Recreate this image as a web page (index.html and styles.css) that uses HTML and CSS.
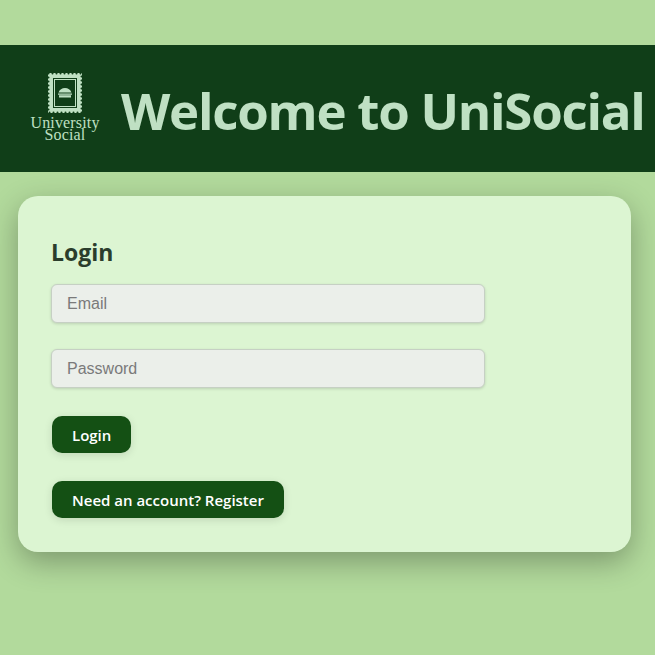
FILE: index.html
```html
<!DOCTYPE html>
<html lang="en">
<head>
  <meta charset="UTF-8">
  <title>UniSocial Login</title>
  <meta name="viewport" content="width=device-width, initial-scale=1.0">
  <link rel="stylesheet" href="styles.css">
</head>
<body>
  <!-- Top banner: logo and page title -->
  <header class="banner">
    <div class="logo">
      <svg class="logo-mark" width="34" height="40" viewBox="0 0 34 40">
        <rect class="stamp-fill" x="0" y="0" width="34" height="40"/>
        <rect class="stamp-holes" x="0.500" y="0.500" width="33" height="39"/>
        <rect class="stamp-dark" x="5" y="5" width="24" height="30"/>
        <rect class="stamp-line" x="6.500" y="6.500" width="21" height="27"/>
        <path class="stamp-fill" d="M10.500 19.500c1-3 3.500-4.500 6.500-4.500s5.500 1.500 6.500 4.500zM10 20.500h14v1.200H10zM11 22.300h12v2.200H11z"/>
      </svg>
      <div class="logo-text">University<br>Social</div>
    </div>
    <h1 class="banner-title">Welcome to UniSocial</h1>
  </header>

  <!-- Login card -->
  <main class="card">
    <h2 class="card-title">Login</h2>
    <form class="login-form">
      <input class="field" type="email" placeholder="Email">
      <input class="field" type="password" placeholder="Password">
      <button class="btn" type="button">Login</button>
      <button class="btn" type="button">Need an account? Register</button>
    </form>
  </main>
</body>
</html>
```

FILE: styles.css
```css
html, body {
  margin: 0;
  padding: 0;
}

body {
  min-height: 100vh;
  padding-top: 45px;
  box-sizing: border-box;
  background: #b2da9c;
  font-family: "Open Sans", "Noto Sans", sans-serif;
  overflow: hidden;
}

/* top banner */
.banner {
  display: flex;
  align-items: center;
  gap: 22px;
  height: 127px;
  padding-left: 31px;
  background: #103e18;
  color: #bfe0c3;
  white-space: nowrap;
}

.logo {
  display: flex;
  flex-direction: column;
  align-items: center;
  width: 68px;
  margin-bottom: 3px;
  flex: none;
}

.logo-mark {
  display: block;
  margin-bottom: 4px;
}

.stamp-fill {
  fill: #bfe0c3;
}

/* round dots along the edge make the stamp's perforation */
.stamp-holes {
  fill: none;
  stroke: #103e18;
  stroke-width: 2;
  stroke-linecap: round;
  stroke-dasharray: 0 4;
}

.stamp-dark {
  fill: #103e18;
}

.stamp-line {
  fill: none;
  stroke: #bfe0c3;
  stroke-width: 1;
}

.logo-text {
  font-family: "Liberation Serif", serif;
  font-size: 16px;
  line-height: 12px;
  letter-spacing: 0.15px;
  text-align: center;
}

.banner-title {
  margin: 4px 0 0;
  font-size: 51px;
  font-weight: 700;
  letter-spacing: -1.25px;
  line-height: 1;
}

/* login card */
.card {
  margin: 24px 24px 0 18px;
  padding: 41px 33px 34px;
  background: #dcf5d2;
  border-radius: 20px;
  box-shadow: 0 10px 30px rgba(0, 0, 0, 0.3);
}

.card-title {
  margin: 0 0 17px;
  font-size: 23px;
  font-weight: 700;
  line-height: 30px;
  color: #2b3d2c;
}

.login-form {
  display: flex;
  flex-direction: column;
  align-items: flex-start;
}

.field {
  width: 434px;
  height: 39px;
  margin-bottom: 26px;
  padding: 0 16px 0 15px;
  box-sizing: border-box;
  background: #ebefea;
  border: 1px solid #c6d0c4;
  border-radius: 6px;
  box-shadow: 0 1px 3px rgba(0, 0, 0, 0.15);
  font-family: "Liberation Sans", Arial, sans-serif;
  font-size: 16px;
}

.field::placeholder {
  color: #7a7a7a;
  opacity: 1;
}

.btn {
  height: 37px;
  margin: 2px 0 26px 1px;
  padding: 0 20px;
  background: #145014;
  border: 0;
  border-radius: 10px;
  box-shadow: 0 2px 8px rgba(0, 0, 0, 0.12);
  color: #fff;
  font-family: "Open Sans", "Noto Sans", sans-serif;
  font-size: 15px;
  font-weight: 600;
}

.btn:last-child {
  margin-bottom: 0;
}
```
